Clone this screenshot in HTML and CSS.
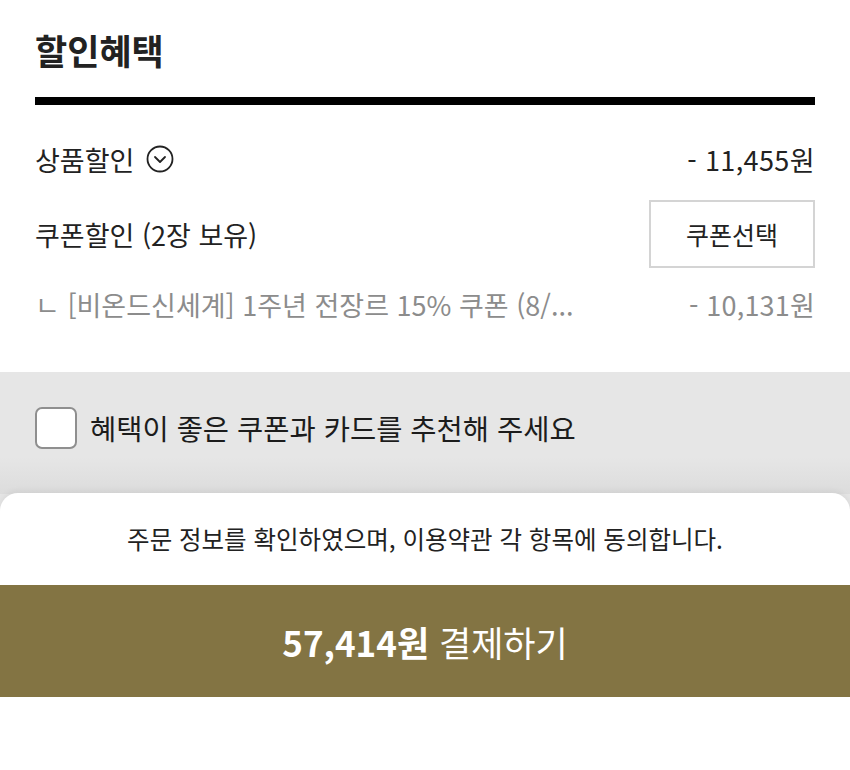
FILE: index.html
```html
<!DOCTYPE html>
<html lang="ko">
<head>
<meta charset="utf-8">
<link rel="stylesheet" href="styles.css">
</head>
<body>
<div class="page">
  <section class="benefit">
    <h1 class="title">할인혜택</h1>
    <div class="rule"></div>
    <div class="row row-product">
      <div class="label">상품할인
        <svg class="chev" width="28" height="28" viewBox="0 0 28 28"><circle cx="14" cy="14" r="12.5" fill="none" stroke="#222" stroke-width="1.8"/><path d="M9 12l5 5 5-5" fill="none" stroke="#222" stroke-width="1.8" stroke-linecap="round" stroke-linejoin="round"/></svg>
      </div>
      <div class="amount">- 11,455원</div>
    </div>
    <div class="row row-coupon">
      <div class="label">쿠폰할인 (2장 보유)</div>
      <button class="coupon-btn">쿠폰선택</button>
    </div>
    <div class="row row-sub">
      <div class="sub-label">ㄴ [비온드신세계] 1주년 전장르 15% 쿠폰 (8/...</div>
      <div class="sub-amount">- 10,131원</div>
    </div>
  </section>
  <section class="recommend">
    <span class="check"></span>
    <span class="rec-text">혜택이 좋은 쿠폰과 카드를 추천해 주세요</span>
  </section>
  <section class="sheet">
    <p class="agree">주문 정보를 확인하였으며, 이용약관 각 항목에 동의합니다.</p>
    <button class="pay"><b>57,414원</b> 결제하기</button>
    <div class="sheet-bottom"></div>
  </section>
</div>
</body>
</html>
```

FILE: styles.css
```css
* { box-sizing: border-box; }
html, body { margin: 0; padding: 0; background: #fff; }
body { font-family: "Noto Sans CJK KR", "Noto Sans", sans-serif; color: #222; }
.page { width: 850px; height: 770px; overflow: hidden; display: flex; flex-direction: column; background: #e5e5e5; }
.benefit { background: #fff; padding: 24px 35px 0; height: 372px; }
.title { margin: 0; font-size: 35px; font-weight: 700; line-height: 52px; color: #222; }
.rule { height: 8px; background: #000; margin-top: 21px; }
.row { display: flex; align-items: center; justify-content: space-between; }
.row-product { height: 68px; margin-top: 20px; }
.label { display: flex; align-items: center; gap: 12px; font-size: 27px; color: #222; }
.chev { display: block; }
.amount { font-size: 27px; color: #222; letter-spacing: 0.4px; }
.row-coupon { height: 68px; margin-top: 7px; }
.coupon-btn { width: 166px; height: 68px; border: 2px solid #d4d4d4; background: #fff; font-family: inherit; font-size: 25px; color: #222; padding: 0; }
.row-sub { height: 60px; margin-top: 6px; }
.sub-label { font-size: 27px; color: #8c8c8c; }
.sub-amount { font-size: 27px; color: #8c8c8c; letter-spacing: 0.2px; }
.recommend { height: 122px; display: flex; align-items: flex-start; padding: 35px 35px 0; gap: 13px; background: linear-gradient(#e6e6e6 0, #e6e6e6 85px, #dcdcdc 122px); }
.check { width: 42px; height: 42px; border: 2px solid #8f8f8f; border-radius: 7px; background: #fff; flex: none; }
.rec-text { font-size: 28.5px; line-height: 42px; color: #1c1c1c; }
.sheet { flex: 1; background: #fff; border-radius: 18px 18px 0 0; box-shadow: 0 -2px 6px rgba(0,0,0,0.06); display: flex; flex-direction: column; margin-top: -1px; }
.agree { margin: 0; height: 92px; padding-top: 29px; text-align: center; font-size: 24.5px; line-height: 34px; color: #222; }
.pay { height: 112px; border: 0; background: #837443; color: #fff; font-family: inherit; font-size: 35px; padding: 0; }
.pay b { font-weight: 700; }
.sheet-bottom { flex: 1; background: #fff; }
```
